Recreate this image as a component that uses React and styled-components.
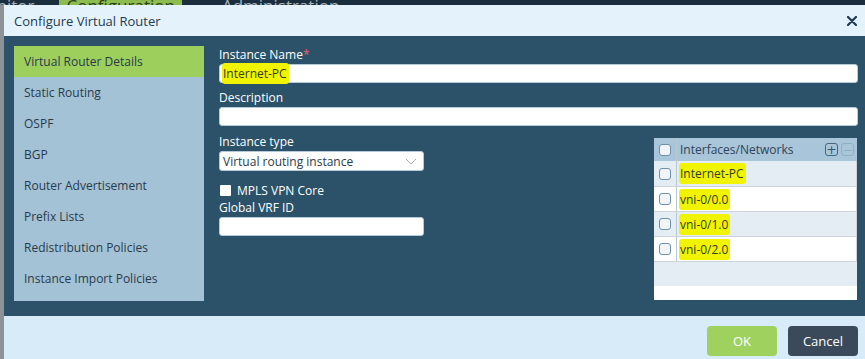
import React from "react";
import styled, { createGlobalStyle } from "styled-components";

const GlobalStyle = createGlobalStyle`
  html, body {
    margin: 0;
    padding: 0;
    width: 865px;
    height: 359px;
    overflow: hidden;
    background: #8d9297;
    font-family: "Open Sans", "Liberation Sans", sans-serif;
  }
`;

const navItems = [
  "Virtual Router Details",
  "Static Routing",
  "OSPF",
  "BGP",
  "Router Advertisement",
  "Prefix Lists",
  "Redistribution Policies",
  "Instance Import Policies",
];

const interfaces = ["Internet-PC", "vni-0/0.0", "vni-0/1.0", "vni-0/2.0"];

function App() {
  return (
    <Page>
      <GlobalStyle />
      <TopNav>
        <NavTab $offset={-36}>Monitor</NavTab>
        <NavTab $active>Configuration</NavTab>
        <NavTab>Administration</NavTab>
      </TopNav>

      <Dialog>
        <Header>
          <Title>Configure Virtual Router</Title>
          <Close aria-label="close">
            <svg width="10" height="10" viewBox="0 0 10 10">
              <path d="M1 1 L9 9 M9 1 L1 9" stroke="#1d3a52" strokeWidth="2.2" strokeLinecap="round" />
            </svg>
          </Close>
        </Header>

        <Body>
          <SideNav>
            {navItems.map((item, i) => (
              <SideItem key={item} $active={i === 0}>{item}</SideItem>
            ))}
          </SideNav>

          <Form>
            <Label>Instance Name<Required>*</Required></Label>
            <Field>
              <Marker $tall>Internet-PC</Marker>
            </Field>

            <Label $top={6}>Description</Label>
            <Field />

            <Lower>
              <LeftCol>
                <Label>Instance type</Label>
                <Select>
                  <span>Virtual routing instance</span>
                  <svg width="12" height="7" viewBox="0 0 12 7">
                    <path d="M1 1 L6 6 L11 1" fill="none" stroke="#a3acb4" strokeWidth="1" />
                  </svg>
                </Select>
                <CheckRow>
                  <WhiteBox />
                  <span>MPLS VPN Core</span>
                </CheckRow>
                <Label>Global VRF ID</Label>
                <Field $narrow />
              </LeftCol>

              <Table>
                <HeadRow>
                  <CheckCell>
                    <GridBox />
                  </CheckCell>
                  <HeadText>
                    <span>Interfaces/Networks</span>
                    <Tools>
                      <ToolBtn>+</ToolBtn>
                      <ToolBtn $disabled>−</ToolBtn>
                    </Tools>
                  </HeadText>
                </HeadRow>
                {interfaces.map((name, i) => (
                  <Row key={name} $striped={i % 2 === 0} $tall={i === 0}>
                    <CheckCell>
                      <GridBox />
                    </CheckCell>
                    <RowText>
                      <Marker $tall>{name}</Marker>
                    </RowText>
                  </Row>
                ))}
                <Filler />
              </Table>
            </Lower>
          </Form>
        </Body>

        <Footer>
          <Button $primary>OK</Button>
          <Button>Cancel</Button>
        </Footer>
      </Dialog>
    </Page>
  );
}

const Page = styled.div`
  position: relative;
  width: 865px;
  height: 359px;
`;

const TopNav = styled.div`
  display: flex;
  height: 5px;
  overflow: hidden;
  background: #1b2e3e;
`;

const NavTab = styled.div`
  margin-left: ${({ $offset }) => ($offset ? `${$offset}px` : "0")};
  padding: 0 7px;
  margin-right: ${({ $active }) => ($active ? "33px" : "18px")};
  font-size: 17px;
  line-height: 20px;
  margin-top: -4px;
  height: 20px;
  color: ${({ $active }) => ($active ? "#2d3e22" : "#a7b2bb")};
  background: ${({ $active }) => ($active ? "#8cbc4e" : "transparent")};
`;

const Dialog = styled.div`
  position: absolute;
  top: 5px;
  left: 4px;
  right: 0;
  bottom: 0;
  display: flex;
  flex-direction: column;
`;

const Header = styled.div`
  height: 31px;
  flex-shrink: 0;
  display: flex;
  align-items: center;
  justify-content: space-between;
  padding: 0 8px 0 10px;
  background: #e4f3fb;
`;

const Title = styled.div`
  font-size: 13px;
  color: #1f3a50;
`;

const Close = styled.div`
  display: flex;
  align-items: center;
  margin-top: 1px;
`;

const Body = styled.div`
  height: 280px;
  box-sizing: border-box;
  flex-shrink: 0;
  display: flex;
  align-items: flex-start;
  gap: 15px;
  padding: 10px 7px 0 10px;
  background: #2c5269;
`;

const SideNav = styled.div`
  width: 190px;
  flex-shrink: 0;
  padding-bottom: 7px;
  background: #a3c2d6;
`;

const SideItem = styled.div`
  height: 31px;
  line-height: 31px;
  padding-left: 10px;
  font-size: 12px;
  color: #2a3a4b;
  background: ${({ $active }) => ($active ? "#9ccf5c" : "transparent")};
`;

const Form = styled.div`
  flex: 1;
  display: flex;
  flex-direction: column;
`;

const Label = styled.div`
  margin-top: ${({ $top }) => ($top ? `${$top}px` : "0")};
  font-size: 12px;
  line-height: 18px;
  color: #ffffff;
`;

const Required = styled.span`
  color: #e4636b;
`;

const Field = styled.div`
  width: ${({ $narrow }) => ($narrow ? "205px" : "auto")};
  height: 19px;
  box-sizing: border-box;
  display: flex;
  align-items: center;
  padding: 0 2px;
  background: #ffffff;
  border: 1px solid #b4cad9;
  border-radius: 3px;
  font-size: 12px;
  color: #2a3a4b;
`;

const Marker = styled.span`
  padding: ${({ $tall }) => ($tall ? "2px 2px 2px 1px" : "1px 1px")};
  background: #f0f400;
  border-radius: 3px;
  color: #333b20;
`;

const Lower = styled.div`
  display: flex;
  justify-content: space-between;
  align-items: flex-start;
  margin-top: 7px;
  padding-right: 1px;
`;

const LeftCol = styled.div`
  width: 205px;
  display: flex;
  flex-direction: column;
`;

const Select = styled(Field)`
  justify-content: space-between;
  padding: 0 6px 0 3px;
  height: 20px;
`;

const CheckRow = styled.div`
  display: flex;
  align-items: center;
  gap: 6px;
  height: 18px;
  margin-top: 10px;
  padding-left: 1px;
  font-size: 12px;
  color: #ffffff;
`;

const WhiteBox = styled.div`
  width: 11px;
  height: 11px;
  background: #ffffff;
  border-radius: 1px;
`;

const Table = styled.div`
  width: 203px;
  height: 162px;
  margin-top: 5px;
  background: #ffffff;
  display: flex;
  flex-direction: column;
`;

const HeadRow = styled.div`
  display: flex;
  height: 23px;
  background: #a8c5d9;
`;

const Row = styled.div`
  display: flex;
  height: ${({ $tall }) => ($tall ? "26px" : "25px")};
  box-sizing: border-box;
  background: ${({ $striped }) => ($striped ? "#e5edf4" : "#ffffff")};
  border-bottom: 1px solid #cdd3d8;
  border-right: 1px solid #cdd3d8;
`;

const CheckCell = styled.div`
  width: 22px;
  flex-shrink: 0;
  display: flex;
  align-items: center;
  justify-content: center;
  border-right: 1px solid #b9c7d1;
`;

const GridBox = styled.div`
  width: 12px;
  height: 12px;
  box-sizing: border-box;
  border: 1.5px solid #6d91aa;
  border-radius: 3px;
  background: #f1f5f8;
`;

const HeadText = styled.div`
  flex: 1;
  display: flex;
  align-items: center;
  justify-content: space-between;
  padding: 0 3px 0 3px;
  font-size: 12px;
  color: #2f4457;
`;

const Tools = styled.div`
  display: flex;
  gap: 3px;
`;

const ToolBtn = styled.div`
  width: 13px;
  height: 13px;
  box-sizing: border-box;
  display: flex;
  align-items: center;
  justify-content: center;
  border: 1.3px solid ${({ $disabled }) => ($disabled ? "#8fb0c4" : "#3e6780")};
  border-radius: 3px;
  font-size: 12px;
  line-height: 1;
  color: ${({ $disabled }) => ($disabled ? "#8fb0c4" : "#2f5770")};
  font-family: "DejaVu Sans", sans-serif;
`;

const RowText = styled.div`
  flex: 1;
  display: flex;
  align-items: center;
  padding-left: 2px;
  font-size: 12px;
`;

const Filler = styled.div`
  height: 24px;
  background: #e5edf4;
`;

const Footer = styled.div`
  flex: 1;
  display: flex;
  justify-content: flex-end;
  align-items: flex-start;
  gap: 11px;
  padding: 10px 7px 0 0;
  background: #d7ecf8;
`;

const Button = styled.button`
  width: 70px;
  height: 30px;
  border: none;
  border-radius: 4px;
  font-family: "Open Sans", "Liberation Sans", sans-serif;
  font-size: 13px;
  color: #ffffff;
  background: ${({ $primary }) => ($primary ? "#9fd15f" : "#3a4a5a")};
  cursor: pointer;
`;

export default App;
